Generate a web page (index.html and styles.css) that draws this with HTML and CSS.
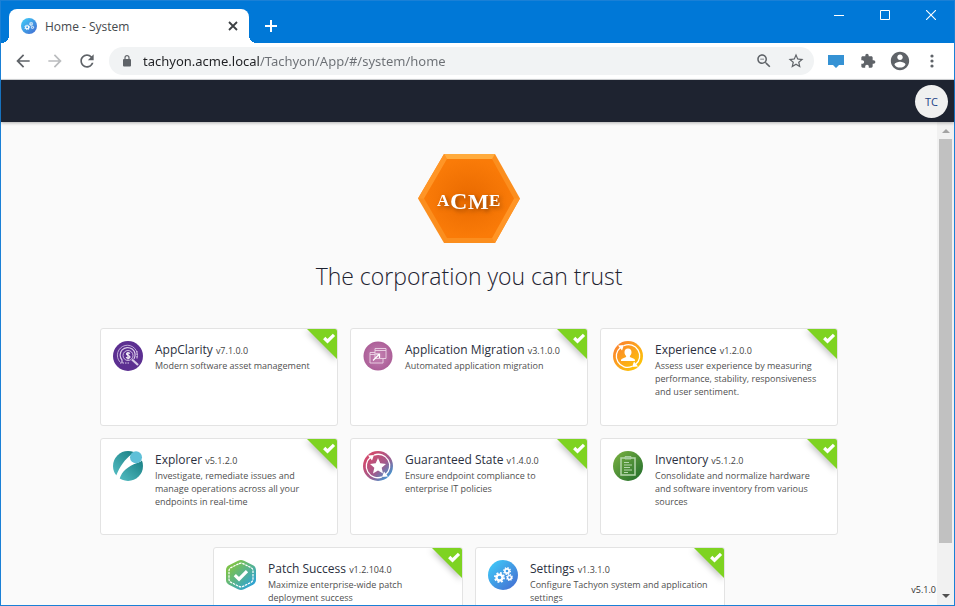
FILE: index.html
```html
<!DOCTYPE html>
<html lang="en">
<head>
    <meta charset="UTF-8">
    <meta name="viewport" content="width=device-width, initial-scale=1.0">
    <title>Home - System</title>
    <link rel="stylesheet" href="styles.css">
</head>
<body>
    <!-- Shared shapes -->
    <svg class="defs" width="0" height="0" aria-hidden="true">
        <defs>
            <linearGradient id="blueGrad" x1="0" y1="0" x2="1" y2="1">
                <stop offset="0" stop-color="#3fd0fb"/>
                <stop offset="1" stop-color="#4468cf"/>
            </linearGradient>
            <symbol id="gear" viewBox="-12 -12 24 24">
                <circle r="6.5" fill="none" stroke="#fff" stroke-width="5"/>
                <circle r="10" fill="none" stroke="#fff" stroke-width="4" stroke-dasharray="4 3.85"/>
            </symbol>
            <symbol id="settings" viewBox="0 0 30 30">
                <circle cx="15" cy="15" r="15" fill="url(#blueGrad)"/>
                <use href="#gear" x="6" y="12" width="11" height="11"/>
                <use href="#gear" x="15" y="7" width="8" height="8"/>
                <use href="#gear" x="18" y="14" width="7" height="7"/>
            </symbol>
            <symbol id="tick" viewBox="0 0 30 30">
                <path d="M0 0h30v30z" fill="#7ed321"/>
                <path d="M17.2 9l3.3 3.2L27 5.8" fill="none" stroke="#fff" stroke-width="3.2"/>
            </symbol>
        </defs>
    </svg>

    <div class="window">
        <!-- Tab strip -->
        <div class="titlebar">
            <div class="tab">
                <svg class="favicon" width="16" height="16"><use href="#settings"/></svg>
                <span class="tab-title">Home - System</span>
                <button class="tab-close" aria-label="Close tab">
                    <svg width="10" height="10" viewBox="0 0 10 10"><path d="M1 1l8 8M9 1L1 9" stroke="#3c4043" stroke-width="1.8"/></svg>
                </button>
            </div>
            <button class="new-tab" aria-label="New tab">
                <svg width="12" height="12" viewBox="0 0 12 12"><path d="M6 0v12M0 6h12" stroke="#fff" stroke-width="2"/></svg>
            </button>
            <div class="window-controls">
                <button aria-label="Minimize"><svg width="10" height="10" viewBox="0 0 10 10"><path d="M0 5.5h10" stroke="#fff"/></svg></button>
                <button aria-label="Maximize"><svg width="10" height="10" viewBox="0 0 10 10"><path d="M.5.5h9v9h-9z" fill="none" stroke="#fff"/></svg></button>
                <button aria-label="Close"><svg width="10" height="10" viewBox="0 0 10 10"><path d="M0 0l10 10M10 0L0 10" stroke="#fff" stroke-width="1.1"/></svg></button>
            </div>
        </div>

        <!-- Toolbar -->
        <div class="toolbar">
            <button class="tool" aria-label="Back"><svg width="20" height="20" viewBox="0 0 24 24"><path d="M20 11H7.83l5.59-5.59L12 4l-8 8 8 8 1.41-1.41L7.83 13H20v-2z"/></svg></button>
            <button class="tool disabled" aria-label="Forward"><svg width="20" height="20" viewBox="0 0 24 24"><path d="M12 4l-1.41 1.41L16.17 11H4v2h12.17l-5.58 5.59L12 20l8-8z"/></svg></button>
            <button class="tool" aria-label="Reload"><svg width="20" height="20" viewBox="0 0 24 24"><path d="M17.65 6.35C16.2 4.9 14.21 4 12 4c-4.42 0-7.99 3.58-7.99 8s3.57 8 7.99 8c3.73 0 6.84-2.55 7.73-6h-2.08c-.82 2.33-3.04 4-5.65 4-3.31 0-6-2.69-6-6s2.69-6 6-6c1.66 0 3.14.69 4.22 1.78L13 11h7V4l-2.35 2.35z"/></svg></button>
            <div class="omnibox">
                <svg class="lock" width="8" height="12" viewBox="0 0 8 12"><path d="M1 4h6a1 1 0 0 1 1 1v5.500a1 1 0 0 1-1 1H1a1 1 0 0 1-1-1V5a1 1 0 0 1 1-1z"/><path d="M2 5V2.700a2 2 0 0 1 4 0V5" fill="none" stroke="#5f6368" stroke-width="1.2"/></svg>
                <input class="address" type="text" aria-label="Address" value="tachyon.acme.local/Tachyon/App/#/system/home">
                <button class="tool" aria-label="Zoom"><svg width="18" height="18" viewBox="0 0 24 24"><path d="M15.5 14h-.79l-.28-.27C15.41 12.590 16 11.110 16 9.500 16 5.910 13.090 3 9.500 3S3 5.910 3 9.500 5.910 16 9.500 16c1.610 0 3.090-.59 4.230-1.570l.27.28v.79l5 4.990L20.490 19l-4.990-5zm-6 0C7.010 14 5 11.990 5 9.500S7.010 5 9.500 5 14 7.010 14 9.500 11.990 14 9.500 14zM7 9h5v1H7z"/></svg></button>
                <button class="tool" aria-label="Bookmark"><svg width="18" height="18" viewBox="0 0 24 24"><path d="M22 9.240l-7.190-.62L12 2 9.190 8.630 2 9.240l5.460 4.730L5.820 21 12 17.270 18.180 21l-1.630-7.030L22 9.240zM12 15.400l-3.760 2.270 1-4.280-3.320-2.880 4.380-.38L12 6.100l1.710 4.040 4.380.38-3.320 2.880 1 4.280L12 15.400z"/></svg></button>
            </div>
            <button class="tool" aria-label="Tachyon"><svg width="16" height="13" viewBox="0 0 16 13"><path d="M0 0h16v10h-5l-3 3-3-3H0z" fill="#3592d4"/></svg></button>
            <button class="tool" aria-label="Extensions"><svg width="16" height="16" viewBox="0 0 24 24"><path d="M20.500 11H19V7c0-1.100-.9-2-2-2h-4V3.500C13 2.120 11.880 1 10.500 1S8 2.120 8 3.500V5H4c-1.100 0-1.990.9-1.990 2v3.800H3.500c1.490 0 2.700 1.210 2.700 2.700s-1.210 2.700-2.700 2.700H2V20c0 1.100.9 2 2 2h3.800v-1.500c0-1.490 1.210-2.700 2.700-2.700 1.490 0 2.700 1.210 2.700 2.700V22H17c1.100 0 2-.9 2-2v-4h1.500c1.380 0 2.500-1.120 2.500-2.500S21.880 11 20.500 11z"/></svg></button>
            <button class="tool" aria-label="Profile"><svg width="22" height="22" viewBox="0 0 24 24"><path d="M12 2C6.480 2 2 6.480 2 12s4.480 10 10 10 10-4.480 10-10S17.520 2 12 2zm0 3c1.660 0 3 1.340 3 3s-1.340 3-3 3-3-1.340-3-3 1.340-3 3-3zm0 14.200c-2.500 0-4.710-1.280-6-3.220.03-1.990 4-3.080 6-3.080 1.990 0 5.970 1.090 6 3.080-1.290 1.940-3.500 3.220-6 3.220z"/></svg></button>
            <button class="tool" aria-label="Menu"><svg width="18" height="18" viewBox="0 0 18 18"><circle cx="9" cy="4" r="1.600"/><circle cx="9" cy="9" r="1.600"/><circle cx="9" cy="14" r="1.600"/></svg></button>
        </div>

        <!-- Application header -->
        <header class="app-header">
            <button class="avatar">TC</button>
        </header>

        <div class="viewport">
            <main class="home">
                <svg class="logo" width="102" height="89" viewBox="0 0 102 89" role="img" aria-label="ACME">
                    <defs>
                        <radialGradient id="hexGrad"><stop offset="0" stop-color="#e96a00"/><stop offset="1" stop-color="#fa7b08"/></radialGradient>
                    </defs>
                    <path d="M26 0h51l25 44.500L77 89H26L0 44.500z" fill="#fb8e1e"/>
                    <path d="M26 0h51l-3 5H29z" fill="#ffab3d"/>
                    <path d="M26 0l3 5L6 44.500H0zM77 89l-3-5 22-39.500h6z" fill="#ff9526"/>
                    <path d="M29 5h45l22 39.500L74 84H29L6 44.500z" fill="url(#hexGrad)"/>
                    <g class="logo-text">
                        <text x="19" y="52" font-size="17">A</text>
                        <text x="32" y="55" font-size="24">C</text>
                        <text x="50" y="55" font-size="22">M</text>
                        <text x="71" y="52" font-size="17">E</text>
                    </g>
                </svg>
                <h1>The corporation you can trust</h1>

                <div class="cards">
                    <a class="card" href="#appclarity">
                        <svg class="icon" viewBox="0 0 30 30">
                            <circle cx="15" cy="15" r="15" fill="#5c2f91"/>
                            <g fill="none" stroke="#d9cbe8">
                                <path d="M7 21a10 10 0 1 1 17-4" stroke-width=".8"/>
                                <path d="M9 22v-3a7.500 7.500 0 1 1 12-1" stroke-width="1.200"/>
                                <circle cx="15" cy="14.500" r="5" stroke-width=".9"/>
                                <path d="M7 22h9M24 10v8" stroke-dasharray="1.500 1"/>
                                <path d="M19 18.500l6 5.500" stroke-width="2.200"/>
                                <path d="M17 12.500c-1-1-3.500-1-3.500.6 0 1.700 3.500 1 3.500 2.800 0 1.500-2.500 1.700-4 .4M15 11v7.500" stroke="#fff" stroke-width="1.100"/>
                            </g>
                        </svg>
                        <div class="info">
                            <h2>AppClarity <small>v7.1.0.0</small></h2>
                            <p>Modern software asset management</p>
                        </div>
                        <svg class="tick"><use href="#tick"/></svg>
                    </a>
                    <a class="card" href="#migration">
                        <svg class="icon" viewBox="0 0 30 30">
                            <defs><radialGradient id="pinkGrad"><stop offset="0" stop-color="#c583b3"/><stop offset="1" stop-color="#ac5f98"/></radialGradient></defs>
                            <circle cx="15" cy="15" r="14.500" fill="url(#pinkGrad)"/>
                            <g fill="none" stroke="#ecd5e6" stroke-width=".9">
                                <path d="M12 7.500h11v10H12zM12 9.500h11"/>
                                <path d="M12 11.500H7v10.500h13v-4.500M7 13.500h5"/>
                                <path d="M10 19.500l6-6M12.500 13h4v4" stroke="#fff" stroke-width="1.200"/>
                            </g>
                        </svg>
                        <div class="info">
                            <h2>Application Migration <small>v3.1.0.0</small></h2>
                            <p>Automated application migration</p>
                        </div>
                        <svg class="tick"><use href="#tick"/></svg>
                    </a>
                    <a class="card" href="#experience">
                        <svg class="icon" viewBox="0 0 30 30">
                            <defs><linearGradient id="sunGrad" x1="0" y1="0" x2="1" y2="1"><stop offset="0" stop-color="#fb7a35"/><stop offset="1" stop-color="#fdd000"/></linearGradient></defs>
                            <circle cx="15" cy="15" r="15" fill="url(#sunGrad)"/>
                            <path d="M11 4.600a11.200 11.200 0 0 1 11.500 19M19 25.400A11.200 11.200 0 0 1 7.500 6.400" fill="none" stroke="#fff" stroke-width="1.300"/>
                            <path d="M5 4.500l6-.5-2 5.500zM25 25.500l-6 .5 2-5.500z" fill="#fff"/>
                            <path d="M15 7.500c2.300 0 3.500 1.500 3.500 3.700 0 1.800-.8 3-1.600 3.700v1.200l4 1.600c.8.400 1.100 1 1.100 2.300H8c0-1.300.3-1.900 1.100-2.300l4-1.600v-1.200c-.8-.7-1.600-1.900-1.600-3.700 0-2.200 1.200-3.700 3.500-3.700z" fill="#fff"/>
                        </svg>
                        <div class="info">
                            <h2>Experience <small>v1.2.0.0</small></h2>
                            <p>Assess user experience by measuring performance, stability, responsiveness and user sentiment.</p>
                        </div>
                        <svg class="tick"><use href="#tick"/></svg>
                    </a>
                    <a class="card" href="#explorer">
                        <svg class="icon" viewBox="0 0 30 30">
                            <defs><linearGradient id="tealGrad" x1="1" y1="0" x2="0" y2="1"><stop offset="0" stop-color="#0d7377"/><stop offset="1" stop-color="#5cc5cb"/></linearGradient></defs>
                            <circle cx="15" cy="15" r="15" fill="url(#tealGrad)"/>
                            <path d="M3 25C7 15 12 8 19 3l11 5c-1 2-3 3-6 4-9 3.500-15 8-17.500 16C5 27.500 4 26.500 3 25z" fill="#fff"/>
                            <circle cx="23" cy="6.200" r="6" fill="#5fc0d8"/>
                        </svg>
                        <div class="info">
                            <h2>Explorer <small>v5.1.2.0</small></h2>
                            <p>Investigate, remediate issues and manage operations across all your endpoints in real-time</p>
                        </div>
                        <svg class="tick"><use href="#tick"/></svg>
                    </a>
                    <a class="card" href="#guaranteed-state">
                        <svg class="icon" viewBox="0 0 30 30">
                            <defs><linearGradient id="stateGrad" x1=".2" y1=".2" x2="1" y2="1"><stop offset="0" stop-color="#cf4a6e"/><stop offset=".45" stop-color="#a25b8c"/><stop offset="1" stop-color="#18b0ee"/></linearGradient></defs>
                            <circle cx="15" cy="15" r="15" fill="url(#stateGrad)"/>
                            <path d="M11 4.100a11.500 11.500 0 0 1 11.500 19.600M19 25.900A11.500 11.500 0 0 1 7.500 6.300" fill="none" stroke="#fff" stroke-width="1.300"/>
                            <path d="M5 4.500l6-.5-2 5.500zM25 25.500l-6 .5 2-5.500z" fill="#fff"/>
                            <path d="M15 7l2.300 5.300 5.700.6-4.300 3.800 1.300 5.700-5-3-5 3 1.300-5.700L7 12.900l5.700-.6z" fill="#fff"/>
                        </svg>
                        <div class="info">
                            <h2>Guaranteed State <small>v1.4.0.0</small></h2>
                            <p>Ensure endpoint compliance to enterprise IT policies</p>
                        </div>
                        <svg class="tick"><use href="#tick"/></svg>
                    </a>
                    <a class="card" href="#inventory">
                        <svg class="icon" viewBox="0 0 30 30">
                            <defs><linearGradient id="greenGrad" x1="0" y1="0" x2="1" y2="1"><stop offset="0" stop-color="#7cb342"/><stop offset="1" stop-color="#1f6b2c"/></linearGradient></defs>
                            <circle cx="15" cy="15" r="15" fill="url(#greenGrad)"/>
                            <g fill="none" stroke="#b5d6ad">
                                <path d="M8 7h14v17H8z" stroke-width="1.500"/>
                                <path d="M12 8V5.500h6V8z" fill="#9cc795" stroke-width=".8"/>
                                <path d="M11 11.500h5M11 14h8M11 16.500h6M11 19h8M11 21.500h4"/>
                            </g>
                        </svg>
                        <div class="info">
                            <h2>Inventory <small>v5.1.2.0</small></h2>
                            <p>Consolidate and normalize hardware and software inventory from various sources</p>
                        </div>
                        <svg class="tick"><use href="#tick"/></svg>
                    </a>
                </div>
                <div class="cards wide">
                    <a class="card" href="#patch-success">
                        <svg class="icon" viewBox="0 0 30 30">
                            <defs><linearGradient id="patchGrad" x1="0" y1="0" x2="1" y2="1"><stop offset=".2" stop-color="#7cc24c"/><stop offset="1" stop-color="#1e9cf0"/></linearGradient></defs>
                            <path d="M12 .8q3-1.500 6 0l9 4.500q3 1.500 3 4.700v10q0 3.200-3 4.700l-9 4.500q-3 1.500-6 0l-9-4.500q-3-1.500-3-4.700V10q0-3.200 3-4.700z" fill="url(#patchGrad)"/>
                            <path d="M13 3.600q2-1 4 0l8 4q2 1 2 3.200v8.400q0 2.200-2 3.200l-8 4q-2 1-4 0l-8-4q-2-1-2-3.200v-8.400q0-2.200 2-3.200z" fill="none" stroke="#fff" stroke-width="1.200" stroke-dasharray="2.500 .8"/>
                            <path d="M8.800 15.200l4.200 4 8-8" fill="none" stroke="#fff" stroke-width="3.200"/>
                        </svg>
                        <div class="info">
                            <h2>Patch Success <small>v1.2.104.0</small></h2>
                            <p>Maximize enterprise-wide patch deployment success</p>
                        </div>
                        <svg class="tick"><use href="#tick"/></svg>
                    </a>
                    <a class="card" href="#settings-app">
                        <svg class="icon"><use href="#settings"/></svg>
                        <div class="info">
                            <h2>Settings <small>v1.3.1.0</small></h2>
                            <p>Configure Tachyon system and application settings</p>
                        </div>
                        <svg class="tick"><use href="#tick"/></svg>
                    </a>
                </div>
                <span class="version">v5.1.0</span>
            </main>
            <div class="scrollbar">
                <svg width="8" height="4" viewBox="0 0 8 4"><path d="M0 4l4-4 4 4z" fill="#a3a3a3"/></svg>
                <div class="track"><div class="thumb"></div></div>
                <svg width="8" height="4" viewBox="0 0 8 4"><path d="M0 0l4 4 4-4z" fill="#505050"/></svg>
            </div>
        </div>
    </div>
</body>
</html>
```
FILE: styles.css
```css
* {
    box-sizing: border-box;
}
body {
    margin: 0;
    font-family: "Open Sans", "Noto Sans", sans-serif;
}
button {
    display: flex;
    align-items: center;
    justify-content: center;
    padding: 0;
    border: 0;
    background: none;
    font-family: inherit;
}
.defs {
    position: absolute;
}
.window {
    display: flex;
    flex-direction: column;
    height: 100vh;
    border: 1px solid #1a80d6;
    background-color: #fafafa;
}

/* tab strip */
.titlebar {
    display: flex;
    flex: none;
    height: 42px;
    padding: 8px 0 0 8px;
    background-color: #0078d7;
}
.tab {
    position: relative;
    display: flex;
    align-items: center;
    width: 240px;
    padding: 0 11px 0 12px;
    border-radius: 8px 8px 0 0;
    background-color: #fff;
}
.tab::before,
.tab::after {
    content: "";
    position: absolute;
    bottom: 0;
    width: 8px;
    height: 8px;
}
.tab::before {
    right: 100%;
    background: radial-gradient(circle at 0 0, #0078d7 8px, #fff 8px);
}
.tab::after {
    left: 100%;
    background: radial-gradient(circle at 100% 0, #0078d7 8px, #fff 8px);
}
.tab-title {
    flex: 1;
    margin-left: 8px;
    font-size: 12px;
    color: #45494d;
}
.new-tab {
    width: 44px;
}
.window-controls {
    display: flex;
    align-items: flex-start;
    margin-left: auto;
}
.window-controls button {
    width: 46px;
    height: 12px;
}

/* toolbar */
.toolbar {
    display: flex;
    flex: none;
    align-items: center;
    height: 37px;
    padding: 0 6px;
    border-bottom: 1px solid #d5d7da;
    background-color: #fff;
}
.tool {
    flex: none;
    width: 32px;
    height: 28px;
    fill: #5f6368;
}
.tool.disabled {
    fill: #babcbe;
}
.omnibox {
    display: flex;
    flex: 1;
    align-items: center;
    height: 28px;
    margin: 0 6px;
    padding: 0 2px 0 14px;
    border-radius: 14px;
    background-color: #f1f3f4;
}
.lock {
    flex: none;
    fill: #5f6368;
}
.address {
    flex: 1;
    min-width: 0;
    margin-left: 12px;
    padding: 0;
    border: 0;
    outline: 0;
    font-family: "Noto Sans", "Open Sans", sans-serif;
    font-size: 13px;
    /* dark host, grey path */
    color: transparent;
    background: linear-gradient(to right, #202124 117px, #6b6f74 117px);
    -webkit-background-clip: text;
    background-clip: text;
}

/* application */
.app-header {
    display: flex;
    flex: none;
    z-index: 1;
    align-items: center;
    justify-content: flex-end;
    height: 42px;
    padding: 0 6px;
    background-color: #1e2330;
    box-shadow: 0 1px 3px rgba(0, 0, 0, 0.3);
}
.avatar {
    width: 33px;
    height: 33px;
    border-radius: 50%;
    background-color: #f0f0f0;
    font-size: 11px;
    color: #1c4587;
}
.viewport {
    display: flex;
    flex: 1;
    min-height: 0;
}
.home {
    position: relative;
    display: flex;
    flex: 1;
    flex-direction: column;
    align-items: center;
    padding-top: 32px;
    overflow: hidden;
}
.logo {
    flex: none;
}
.logo-text {
    font-family: "Liberation Serif", serif;
    font-weight: bold;
    fill: #fff;
    filter: drop-shadow(2px 2px 2px rgba(90, 40, 0, 0.6));
}
h1 {
    margin: 16px 0 35px;
    font-size: 23px;
    font-weight: 300;
    line-height: 34px;
    color: #1e2330;
}
.cards {
    display: grid;
    flex: none;
    grid-template-columns: repeat(3, 238px);
    grid-template-rows: 98px 97px;
    gap: 12px;
    margin-bottom: 12px;
}
.cards.wide {
    grid-template-columns: repeat(2, 250px);
    grid-template-rows: 98px;
}
.card {
    position: relative;
    display: flex;
    gap: 12px;
    padding: 12px;
    border: 1px solid #e3e3e3;
    border-radius: 3px;
    background-color: #fff;
    text-decoration: none;
    overflow: hidden;
}
.icon {
    flex: none;
    width: 30px;
    height: 30px;
}
h2 {
    margin: 0;
    font-size: 12px;
    font-weight: 400;
    line-height: 17px;
    color: #2b3040;
}
h2 small {
    font-size: 9px;
    color: #444;
}
.card p {
    margin: 0;
    font-size: 9px;
    line-height: 13px;
    color: #505050;
}
.tick {
    position: absolute;
    top: 0;
    right: 0;
    width: 30px;
    height: 30px;
    filter: drop-shadow(-1px 2px 3px rgba(0, 0, 0, 0.25));
}
.version {
    position: absolute;
    right: 1px;
    bottom: 9px;
    font-size: 9px;
    color: #333;
}
.scrollbar {
    display: flex;
    flex: none;
    flex-direction: column;
    align-items: center;
    width: 17px;
    padding: 7px 0;
    background-color: #f1f1f1;
}
.track {
    flex: 1;
    width: 13px;
    padding: 6px 0;
}
.thumb {
    height: 90%;
    background-color: #c1c1c1;
}
```
